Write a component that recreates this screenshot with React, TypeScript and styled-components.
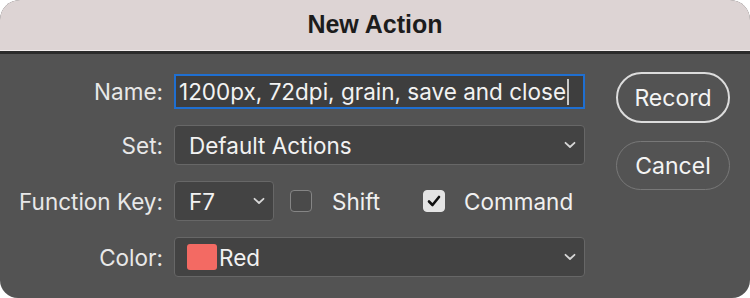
import React from "react";
import styled, { createGlobalStyle } from "styled-components";

const Global = createGlobalStyle`
  html, body { margin: 0; padding: 0; background: #ffffff; }
  body { font-family: Inter, "Liberation Sans", sans-serif; }
  * { box-sizing: border-box; }
`;

const Window = styled.div`
  width: 750px;
  height: 298px;
  border-radius: 20px 20px 18px 18px;
  overflow: hidden;
  display: flex;
  flex-direction: column;
  background: #535353;
`;

const TitleBar = styled.div`
  height: 54px;
  flex: none;
  background: #ddd4d4;
  border-bottom: 3px solid #2b2b2b;
  box-shadow: inset 0 -1px 0 #f2eded;
  display: flex;
  align-items: center;
  justify-content: center;
  padding-bottom: 3px;
`;

const Title = styled.div`
  font-family: "Liberation Sans", Arial, sans-serif;
  font-weight: 700;
  font-size: 25px;
  color: #1c1c1c;
`;

const Body = styled.div`
  flex: 1;
  display: flex;
  align-items: flex-start;
  padding: 20px 20px 20px 0;
`;

const Form = styled.div`
  display: grid;
  grid-template-columns: 163px 411px;
  column-gap: 11px;
  row-gap: 16px;
  align-items: center;
`;

const Label = styled.div`
  text-align: right;
  font-size: 22.5px;
  color: #e8e8e8;
  white-space: nowrap;
`;

const NameInput = styled.div`
  height: 35px;
  border: 2px solid #1f6fd1;
  background: #3e3e3e;
  display: flex;
  align-items: center;
  padding-left: 3px;
  font-size: 22.5px;
  color: #f2f2f2;
  white-space: nowrap;
`;

const Caret = styled.span`
  display: inline-block;
  width: 2px;
  height: 26px;
  background: #c8c8c8;
  margin-left: 1px;
`;

const Select = styled.div<{ $w?: number; $pl?: number }>`
  height: 40px;
  width: ${(p) => (p.$w ? `${p.$w}px` : "100%")};
  flex: none;
  border: 1px solid #676767;
  border-radius: 4px;
  background: #434343;
  display: flex;
  align-items: center;
  padding-left: ${(p) => p.$pl ?? 14}px;
  padding-right: 8px;
  font-size: 22.5px;
  color: #f2f2f2;
`;

const SelectText = styled.span`
  flex: 1;
  display: flex;
  align-items: center;
  gap: 2px;
`;

const Chevron = () => (
  <svg width="12" height="8" viewBox="0 0 12 8">
    <path d="M1.5 1.8 L6 6 L10.5 1.8" fill="none" stroke="#d6d6d6" strokeWidth="1.8" strokeLinecap="round" strokeLinejoin="round" />
  </svg>
);

const Row = styled.div`
  display: flex;
  align-items: center;
`;

const Check = styled.div<{ $on?: boolean; $ml: number }>`
  width: 22px;
  height: 22px;
  margin-left: ${(p) => p.$ml}px;
  border-radius: 4px;
  border: 1.5px solid ${(p) => (p.$on ? "#e4e4e4" : "#858585")};
  background: ${(p) => (p.$on ? "#e4e4e4" : "#4a4a4a")};
  display: flex;
  align-items: center;
  justify-content: center;
`;

const CheckLabel = styled.span<{ $ml: number }>`
  margin-left: ${(p) => p.$ml}px;
  font-size: 22.5px;
  color: #f0f0f0;
`;

const Swatch = styled.span`
  width: 30px;
  height: 26px;
  border-radius: 3px;
  background: #f36a63;
  flex: none;
`;

const Buttons = styled.div`
  margin-left: 31px;
  margin-top: -2px;
  display: flex;
  flex-direction: column;
  gap: 18px;
`;

const Pill = styled.div<{ $primary?: boolean }>`
  width: 114px;
  height: ${(p) => (p.$primary ? 51 : 49)}px;
  border-radius: 26px;
  border: ${(p) => (p.$primary ? "2px solid #dcdcdc" : "1.5px solid #787878")};
  display: flex;
  align-items: center;
  justify-content: center;
  font-size: 23px;
  color: #f4f4f4;
`;

export default function App() {
  return (
    <>
      <Global />
      <Window>
        <TitleBar>
          <Title>New Action</Title>
        </TitleBar>
        <Body>
          <Form>
            <Label>Name:</Label>
            <NameInput>
              1200px, 72dpi, grain, save and close
              <Caret />
            </NameInput>

            <Label>Set:</Label>
            <Select>
              <SelectText>Default Actions</SelectText>
              <Chevron />
            </Select>

            <Label>Function Key:</Label>
            <Row>
              <Select $w={100}>
                <SelectText>F7</SelectText>
                <Chevron />
              </Select>
              <Check $ml={16} />
              <CheckLabel $ml={20}>Shift</CheckLabel>
              <Check $on $ml={43}>
                <svg width="14" height="12" viewBox="0 0 14 12">
                  <path d="M2 6.5 L5.5 10 L12 2" fill="none" stroke="#111" strokeWidth="2.6" strokeLinecap="round" strokeLinejoin="round" />
                </svg>
              </Check>
              <CheckLabel $ml={19}>Command</CheckLabel>
            </Row>

            <Label>Color:</Label>
            <Select $pl={12}>
              <SelectText>
                <Swatch />
                Red
              </SelectText>
              <Chevron />
            </Select>
          </Form>
          <Buttons>
            <Pill $primary>Record</Pill>
            <Pill>Cancel</Pill>
          </Buttons>
        </Body>
      </Window>
    </>
  );
}
